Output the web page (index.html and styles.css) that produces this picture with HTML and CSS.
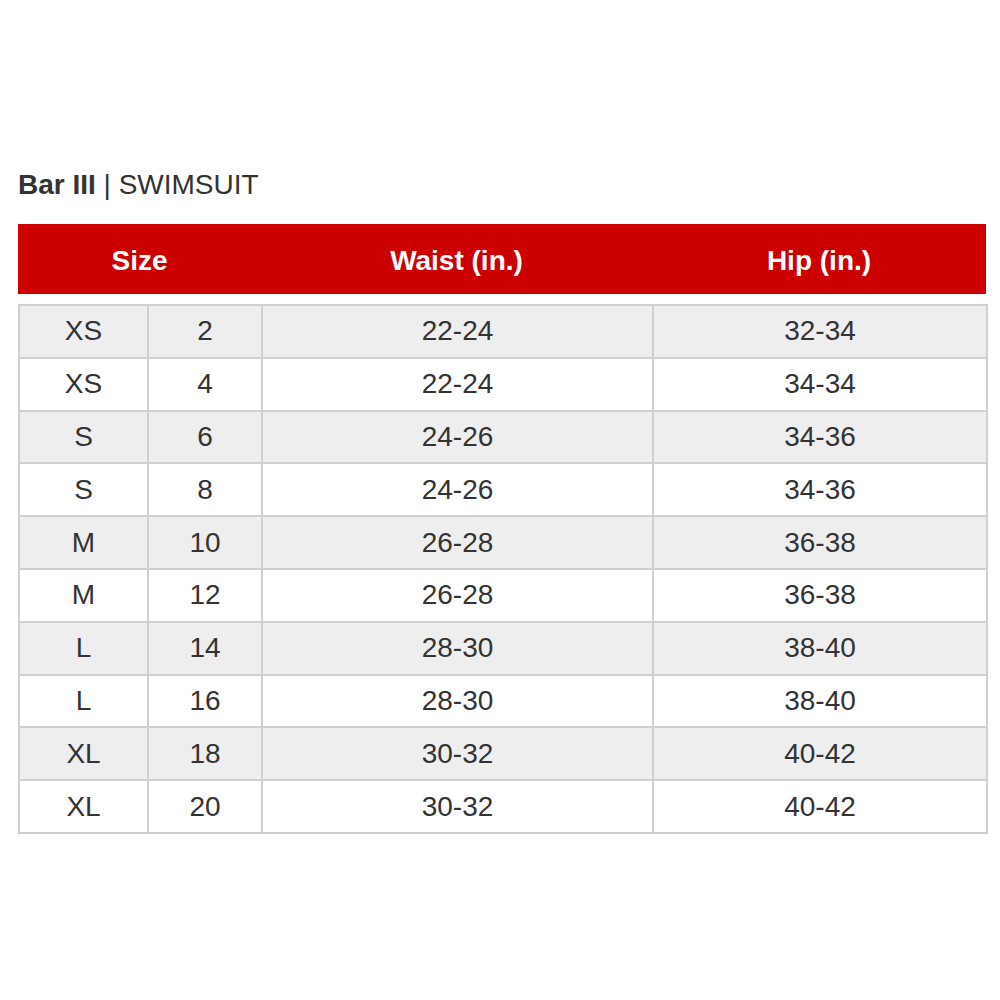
FILE: index.html
```html
<!DOCTYPE html>
<html>
<head>
<meta charset="utf-8">
<link rel="stylesheet" href="styles.css">
</head>
<body>
<div class="wrap">
  <h1 class="title"><b>Bar III</b> | SWIMSUIT</h1>
  <div class="head">
    <div>Size</div>
    <div>Waist (in.)</div>
    <div>Hip (in.)</div>
  </div>
  <table class="chart">
    <colgroup>
      <col class="c1"><col class="c2"><col class="c3"><col class="c4">
    </colgroup>
    <tbody>
      <tr><td>XS</td><td>2</td><td>22-24</td><td>32-34</td></tr>
      <tr><td>XS</td><td>4</td><td>22-24</td><td>34-34</td></tr>
      <tr><td>S</td><td>6</td><td>24-26</td><td>34-36</td></tr>
      <tr><td>S</td><td>8</td><td>24-26</td><td>34-36</td></tr>
      <tr><td>M</td><td>10</td><td>26-28</td><td>36-38</td></tr>
      <tr><td>M</td><td>12</td><td>26-28</td><td>36-38</td></tr>
      <tr><td>L</td><td>14</td><td>28-30</td><td>38-40</td></tr>
      <tr><td>L</td><td>16</td><td>28-30</td><td>38-40</td></tr>
      <tr><td>XL</td><td>18</td><td>30-32</td><td>40-42</td></tr>
      <tr><td>XL</td><td>20</td><td>30-32</td><td>40-42</td></tr>
    </tbody>
  </table>
</div>
</body>
</html>
```
FILE: styles.css
```css
html, body {
  margin: 0;
  padding: 0;
  background: #fff;
}
body {
  font-family: "Liberation Sans", Arial, sans-serif;
  color: #333;
}
.wrap {
  padding: 169px 0 0 18px;
  width: 968px;
}
.title {
  margin: 0;
  font-size: 28px;
  line-height: 32px;
  font-weight: normal;
  color: #333;
}
.title b {
  font-weight: bold;
}
.head {
  margin-top: 23px;
  height: 70px;
  box-sizing: border-box;
  padding-top: 3px;
  background: #cc0000;
  display: grid;
  grid-template-columns: 243px 391px 334px;
  align-items: center;
  color: #fff;
  font-weight: bold;
  font-size: 28px;
  text-align: center;
}
.chart {
  margin-top: 10px;
  border-collapse: collapse;
  table-layout: fixed;
  width: 968px;
}
.c1 { width: 129px; }
.c2 { width: 114px; }
.c3 { width: 391px; }
.c4 { width: 334px; }
.chart td {
  border: 2px solid #d0d0d0;
  height: 50.8px;
  padding: 0;
  text-align: center;
  vertical-align: middle;
  font-size: 28px;
  color: #333;
}
.chart tr:nth-child(odd) td {
  background: #eeeeee;
}
.chart tr:nth-child(even) td {
  background: #fff;
}
```
